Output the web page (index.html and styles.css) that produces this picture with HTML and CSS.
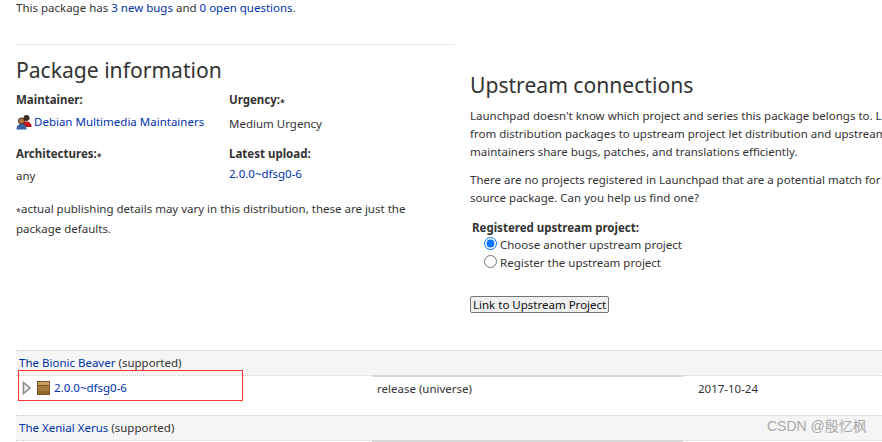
FILE: index.html
```html
<!DOCTYPE html>
<html lang="en">
<head>
<meta charset="utf-8">
<title>Package information</title>
<link rel="stylesheet" href="styles.css">
</head>
<body>
<div class="page">
  <p class="summary">This package has <a href="#">3 new bugs</a> and <a href="#">0 open questions</a>.</p>
  <div class="columns">
    <section class="info">
      <h2>Package information</h2>
      <div class="facts">
        <div class="fact">
          <div class="label">Maintainer:</div>
          <div class="value value-maintainer">
            <svg class="team-icon" width="16" height="16" viewBox="0 0 16 16">
              <circle cx="10.500" cy="4" r="3" fill="#3a2a20"/>
              <path d="M6 13c0-4 2-5.500 4.500-5.500S15.500 9 15.500 12.500V13z" fill="#c4161c"/>
              <circle cx="5.500" cy="7" r="3" fill="#b9763c" stroke="#3a2a20" stroke-width="1"/>
              <path d="M.5 15.500c0-4 2-5.500 5-5.500s5 1.500 5 5.500z" fill="#35659f"/>
            </svg>
            <a href="#">Debian Multimedia Maintainers</a>
          </div>
        </div>
        <div class="fact">
          <div class="label">Urgency:<span class="star">*</span></div>
          <div class="value value-urgency">Medium Urgency</div>
        </div>
        <div class="fact">
          <div class="label">Architectures:<span class="star">*</span></div>
          <div class="value">any</div>
        </div>
        <div class="fact">
          <div class="label">Latest upload:</div>
          <div class="value value-upload"><a href="#">2.0.0~dfsg0-6</a></div>
        </div>
      </div>
      <p class="note"><span class="star">*</span>actual publishing details may vary in this distribution, these are just the package defaults.</p>
    </section>
    <section class="upstream">
      <h2>Upstream connections</h2>
      <p class="para">Launchpad doesn't know which project and series this package belongs to. Links<br>from distribution packages to upstream project let distribution and upstream<br>maintainers share bugs, patches, and translations efficiently.</p>
      <p class="para">There are no projects registered in Launchpad that are a potential match for this<br>source package. Can you help us find one?</p>
      <form class="link-form">
        <div class="form-label">Registered upstream project:</div>
        <label class="choice"><input type="radio" name="up" checked>Choose another upstream project</label>
        <label class="choice"><input type="radio" name="up">Register the upstream project</label>
        <button type="button" class="submit">Link to Upstream Project</button>
      </form>
    </section>
  </div>
  <div class="series">
    <div class="row head"><a href="#">The Bionic Beaver</a> (supported)</div>
    <div class="row body">
      <div class="cell first">
        <svg class="twisty" width="10" height="14" viewBox="0 0 10 14"><path d="M1.500 1.500 8 7l-6.500 5.500z" fill="#f0f0f0" stroke="#888" stroke-width="1.500"/></svg>
        <svg class="pkg" width="13" height="14" viewBox="0 0 13 14">
          <rect x=".5" y=".5" width="12" height="13" fill="#a87a3c" stroke="#7a5628"/>
          <rect x="1" y="1" width="11" height="3" fill="#c99f62"/>
          <rect x="1" y="4" width="11" height="1" fill="#7a5628"/>
          <rect x="1" y="10" width="11" height="3" fill="#8f6630"/>
        </svg>
        <a href="#">2.0.0~dfsg0-6</a>
      </div>
      <div class="cell second">release (universe)</div>
      <div class="cell third">2017-10-24</div>
    </div>
    <div class="row head"><a href="#">The Xenial Xerus</a> (supported)</div>
    <div class="row body">
      <div class="cell first"></div>
      <div class="cell second"></div>
    </div>
  </div>
</div>
<div class="highlight"></div>
<div class="watermark">CSDN @殷忆枫</div>
</body>
</html>
```
FILE: styles.css
```css
html, body {
  margin: 0;
  height: 442px;
  overflow: hidden;
  background: #fff;
}
body {
  position: relative;
  font-family: "Noto Sans", "Open Sans", sans-serif;
  font-size: 11.500px;
  color: #333;
}
a {
  color: #03a;
  text-decoration: none;
}
p {
  margin: 0;
}
h2 {
  margin: 0;
  font-weight: 400;
  font-size: 21.100px;
  line-height: 28px;
  color: #333;
}
.page {
  box-sizing: border-box;
  width: 882px;
  padding-left: 16px;
}
.summary {
  line-height: 16px;
}
.columns {
  display: flex;
  margin-top: 28px;
}
.info {
  flex: none;
  width: 439px;
  box-sizing: border-box;
  border-top: 1px solid #e8e8e8;
  height: 306px;
  padding-top: 11px;
}
.facts {
  display: grid;
  grid-template-columns: 213px 1fr;
  margin-top: 8px;
  row-gap: 13px;
}
.label {
  font-weight: 700;
  line-height: 16px;
}
.star {
  font-size: 9px;
  line-height: 0;
  vertical-align: -2px;
}
.value {
  margin-top: 5px;
  line-height: 18px;
  display: flex;
  align-items: center;
}
.value-urgency {
  margin-top: 7px;
}
.value-upload {
  margin-top: 3px;
}
.team-icon {
  margin-right: 2px;
}
.note {
  margin-top: 14px;
  width: 410px;
  line-height: 20px;
}
.upstream {
  flex: 1;
  min-width: 0;
  overflow: hidden;
  margin-left: 15px;
  padding-top: 27px;
  white-space: nowrap;
}
.para {
  margin-top: 8px;
  line-height: 18px;
}
.para + .para {
  margin-top: 10px;
}
.link-form {
  margin-top: 12px;
  display: flex;
  flex-direction: column;
  align-items: flex-start;
}
.form-label {
  margin-left: 2px;
  font-weight: 700;
  line-height: 18px;
}
.choice {
  display: flex;
  align-items: flex-start;
  margin-left: 14px;
  line-height: 18px;
}
.choice input {
  margin: 1px 3px 0 0;
  width: 13px;
  height: 13px;
}
.choice:first-of-type {
  margin-top: -1px;
}
.submit {
  margin-top: 24px;
  height: 17px;
  padding: 0 2px;
  font: inherit;
  line-height: 14px;
  color: #111;
  background: #f0f0f0;
  border: 1px solid #767676;
  border-radius: 2px;
}
.row {
  box-sizing: border-box;
  border-top: 1px dotted #ccc;
}
.head {
  height: 25px;
  background: #f5f5f5;
  padding: 3px 3px 0;
  line-height: 18px;
}
.body {
  display: grid;
  grid-template-columns: 356px 311px 1fr;
  height: 40px;
}
.cell {
  display: flex;
  align-items: center;
  height: 24px;
  line-height: 24px;
}
.second {
  border-top: 2px solid #d8d8d8;
  margin-top: -1px;
  padding-left: 5px;
  padding-bottom: 2px;
}
.third {
  margin-top: 1px;
  padding-left: 15px;
}
.first {
  padding-left: 6px;
}
.twisty {
  margin-right: 5px;
}
.pkg {
  margin-right: 4px;
}
.highlight {
  position: absolute;
  left: 18px;
  top: 370px;
  width: 223px;
  height: 29px;
  border: 1px solid #f33;
}
.watermark {
  position: absolute;
  left: 767px;
  top: 417px;
  font-family: "Liberation Sans", "Noto Sans CJK SC", sans-serif;
  font-size: 14px;
  line-height: 18px;
  color: #a8a8a8;
}
```
